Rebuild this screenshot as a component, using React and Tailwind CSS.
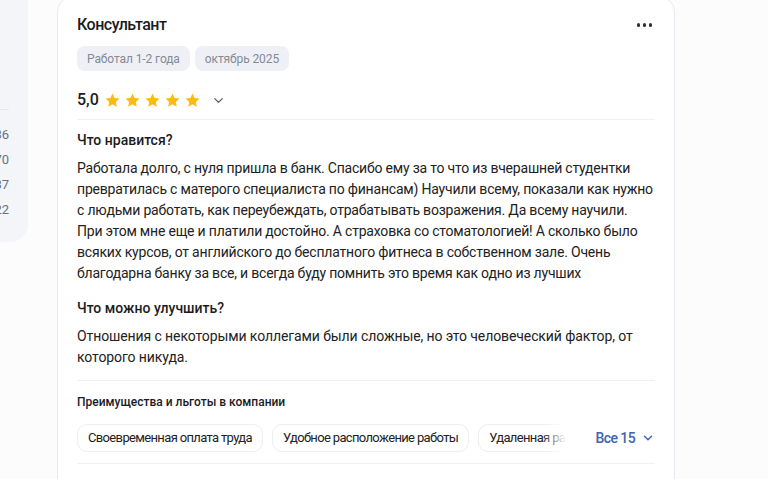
import { ChevronDown, ThumbsUp, ThumbsDown, MessageCircle } from 'lucide-react';

function Star() {
  return (
    <svg width="17" height="17" viewBox="0 0 24 24" className="shrink-0">
      <path
        d="M12 2.2l2.95 6.3 6.85.8-5.08 4.7 1.36 6.8L12 17.4l-6.08 3.4 1.36-6.8L2.2 9.3l6.85-.8z"
        fill="#ffbb0d"
      />
    </svg>
  );
}

function Tag({ children }) {
  return (
    <span className="h-[25px] px-[10px] flex items-center rounded-[8px] bg-[#eef0f5] text-[12px] tracking-[-0.1px] text-[#848a96] whitespace-nowrap">
      {children}
    </span>
  );
}

function Perk({ children }) {
  return (
    <span className="h-[28px] px-[10px] flex items-center rounded-[10px] border border-[#eceef2] bg-white text-[13px] tracking-[-0.65px] text-[#222] whitespace-nowrap shrink-0">
      {children}
    </span>
  );
}

export default function App() {
  const stats = ['36', '70', '37', '22'];

  return (
    <div className="w-[768px] h-[479px] overflow-hidden bg-[#fcfcfd] flex items-start font-['Roboto',sans-serif]">
      {/* Левая колонка (обрезана) */}
      <div className="w-[180px] -ml-[152px] h-[242px] shrink-0 bg-[#f4f5f9] rounded-br-[18px] pt-[109px] pr-[19px]">
        <div className="border-t border-[#e6e8ee]" />
        <div className="mt-[16px] flex flex-col gap-[7px] text-right text-[13px] leading-[18px] text-[#6b7080]">
          {stats.map((s) => (
            <div key={s}>{s}</div>
          ))}
        </div>
      </div>

      {/* Карточка отзыва */}
      <div className="ml-[29px] -mt-[4px] w-[618px] shrink-0 bg-white border border-[#e8eaf0] rounded-[16px] pl-[19px] pr-[19px] pt-[16px] pb-6">
        <div className="flex items-center justify-between">
          <h3 className="text-[16px] leading-[24px] font-medium tracking-[-0.5px] text-[#1b1b1f]">Консультант</h3>
          <div className="flex gap-[2.5px] mr-[3px]">
            <span className="w-[3.5px] h-[3.5px] rounded-full bg-[#2a2f3a]" />
            <span className="w-[3.5px] h-[3.5px] rounded-full bg-[#2a2f3a]" />
            <span className="w-[3.5px] h-[3.5px] rounded-full bg-[#2a2f3a]" />
          </div>
        </div>

        <div className="flex gap-[5px] mt-[9px]">
          <Tag>Работал 1-2 года</Tag>
          <Tag>октябрь 2025</Tag>
        </div>

        <div className="flex items-center mt-[17px] h-[24px]">
          <span className="text-[16px] font-medium text-[#1b1b1f]">5,0</span>
          <div className="flex gap-[3px] ml-[5px]">
            <Star />
            <Star />
            <Star />
            <Star />
            <Star />
          </div>
          <ChevronDown size={15} strokeWidth={2} className="ml-[10px] text-[#555a64]" />
        </div>

        <div className="mt-[7px] border-t border-[#eff1f4] w-[578px]" />

        <h4 className="mt-[10px] text-[14px] leading-[20px] font-medium text-[#1b1b1f]">Что нравится?</h4>
        <p className="mt-[8px] text-[14px] leading-[21px] tracking-[-0.2px] text-[#222] whitespace-nowrap">
          Работала долго, с нуля пришла в банк. Спасибо ему за то что из вчерашней студентки
          <br />
          превратилась с матерого специалиста по финансам) Научили всему, показали как нужно
          <br />
          с людьми работать, как переубеждать, отрабатывать возражения. Да всему научили.
          <br />
          При этом мне еще и платили достойно. А страховка со стоматологией! А сколько было
          <br />
          всяких курсов, от английского до бесплатного фитнеса в собственном зале. Очень
          <br />
          благодарна банку за все, и всегда буду помнить это время как одно из лучших
        </p>

        <h4 className="mt-[14px] text-[14px] leading-[20px] font-medium text-[#1b1b1f]">Что можно улучшить?</h4>
        <p className="mt-[8px] text-[14px] leading-[21px] tracking-[-0.1px] text-[#222] whitespace-nowrap">
          Отношения с некоторыми коллегами были сложные, но это человеческий фактор, от
          <br />
          которого никуда.
        </p>

        <div className="mt-[12px] border-t border-[#eff1f4] w-[578px]" />

        <h5 className="mt-[13px] text-[12px] leading-[16px] font-medium text-[#1b1b1f]">
          Преимущества и льготы в компании
        </h5>

        <div className="mt-[14px] flex items-center w-[578px]">
          <div className="relative w-[490px] overflow-hidden flex gap-[9px]">
            <Perk>Своевременная оплата труда</Perk>
            <Perk>Удобное расположение работы</Perk>
            <Perk>Удаленная работа</Perk>
            <div className="absolute right-0 top-0 h-full w-[24px] bg-gradient-to-r from-transparent to-white" />
          </div>
          <button className="ml-[30px] flex items-center gap-[6px] text-[14px] font-medium tracking-[-0.6px] text-[#4064b3] whitespace-nowrap">
            Все 15
            <ChevronDown size={14} strokeWidth={2.5} />
          </button>
        </div>

        <div className="mt-[11px] border-t border-[#eff1f4] w-[578px]" />

        <div className="mt-[13px] flex items-center text-[13px] text-[#a3abbe]">
          <span className="flex items-center gap-1">
            <ThumbsUp size={16} /> Полезно
          </span>
          <span className="ml-[110px] flex items-center gap-1">
            <ThumbsDown size={16} /> Не полезно
          </span>
          <span className="ml-[20px] flex items-center gap-1">
            <MessageCircle size={16} /> Ответить
          </span>
        </div>
      </div>
    </div>
  );
}
